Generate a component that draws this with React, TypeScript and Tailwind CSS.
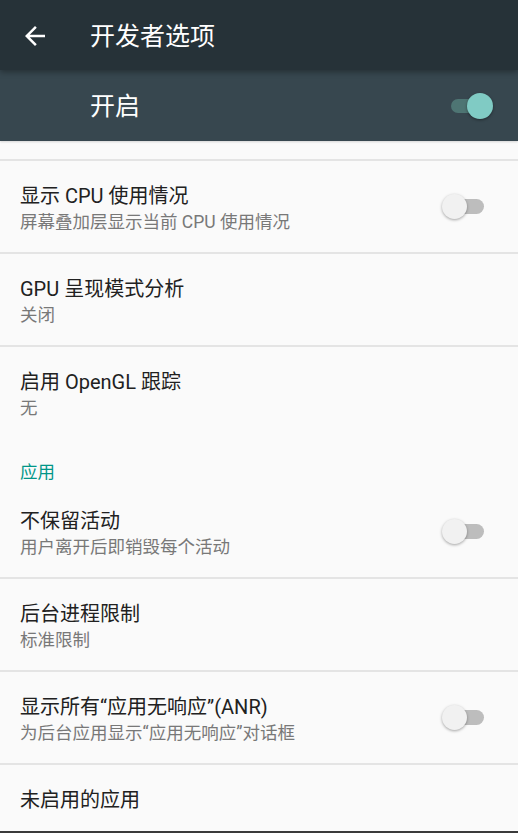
import React from "react";

const FONT = { fontFamily: 'Roboto, "Noto Sans CJK SC", "Noto Sans", sans-serif' };

function SwitchOff() {
  return (
    <div className="relative w-[44px] h-[26px] shrink-0">
      <div className="absolute left-[8px] top-[5px] w-[34px] h-[15px] rounded-full bg-[#bdbdbd]" />
      <div className="absolute left-0 top-0 w-[25px] h-[25px] rounded-full bg-[#f1f1f1] shadow-[0_1px_3px_rgba(0,0,0,0.35)]" />
    </div>
  );
}

function SwitchOn() {
  return (
    <div className="relative w-[44px] h-[26px] shrink-0">
      <div className="absolute left-[2px] top-[6px] w-[34px] h-[14px] rounded-full bg-[#4e7573]" />
      <div className="absolute left-[18px] top-0 w-[26px] h-[26px] rounded-full bg-[#80cbc4] shadow-[0_1px_3px_rgba(0,0,0,0.4)]" />
    </div>
  );
}

function Divider() {
  return <div className="h-[2px] bg-[#e4e4e4] shrink-0" />;
}

function Row({ title, sub, toggle }: { title: string; sub?: string; toggle?: boolean }) {
  return (
    <div className="h-[91px] shrink-0 flex items-start justify-between pl-[20px] pr-[32px]">
      <div className="pt-[22px] flex flex-col">
        <div className="text-[20px] leading-[26px] text-[#212121]">{title}</div>
        {sub && <div className="text-[17.5px] leading-[27px] text-[#787878]">{sub}</div>}
      </div>
      {toggle && (
        <div className="self-center">
          <SwitchOff />
        </div>
      )}
    </div>
  );
}

export default function App() {
  return (
    <div className="w-[518px] h-[833px] flex flex-col overflow-hidden bg-[#fafafa]" style={FONT}>
      <div className="h-[70px] shrink-0 bg-[#263238] flex items-center pl-[20px] relative z-10 shadow-[0_2px_6px_rgba(0,0,0,0.35)]">
        <svg width="30" height="30" viewBox="0 0 24 24" className="shrink-0 mt-[1px]">
          <path fill="#ffffff" d="M20 11H7.83l5.59-5.59L12 4l-8 8 8 8 1.41-1.41L7.83 13H20v-2z" />
        </svg>
        <div className="ml-[40px] text-[25px] leading-[30px] text-white pt-[3px]">开发者选项</div>
      </div>
      <div className="h-[71px] shrink-0 bg-[#37474f] flex items-center justify-between pl-[90px] pr-[25px] shadow-[0_1px_2px_rgba(0,0,0,0.15)]">
        <div className="text-[25px] leading-[30px] text-white pt-[3px]">开启</div>
        <SwitchOn />
      </div>
      <div className="flex-1 flex flex-col overflow-hidden">
        <div className="h-[18px] shrink-0" />
        <Divider />
        <Row title="显示 CPU 使用情况" sub="屏幕叠加层显示当前 CPU 使用情况" toggle />
        <Divider />
        <Row title="GPU 呈现模式分析" sub="关闭" />
        <Divider />
        <Row title="启用 OpenGL 跟踪" sub="无" />
        <div className="h-[48px] shrink-0 pl-[20px] pt-[22px]">
          <div className="text-[17.5px] leading-[24px] text-[#009688]">应用</div>
        </div>
        <Row title="不保留活动" sub="用户离开后即销毁每个活动" toggle />
        <Divider />
        <Row title="后台进程限制" sub="标准限制" />
        <Divider />
        <Row title={"显示所有“应用无响应”(ANR)"} sub={"为后台应用显示“应用无响应”对话框"} toggle />
        <Divider />
        <Row title="未启用的应用" sub=" " />
      </div>
      <div className="h-[2px] shrink-0 bg-[#3a3a3a]" />
    </div>
  );
}
